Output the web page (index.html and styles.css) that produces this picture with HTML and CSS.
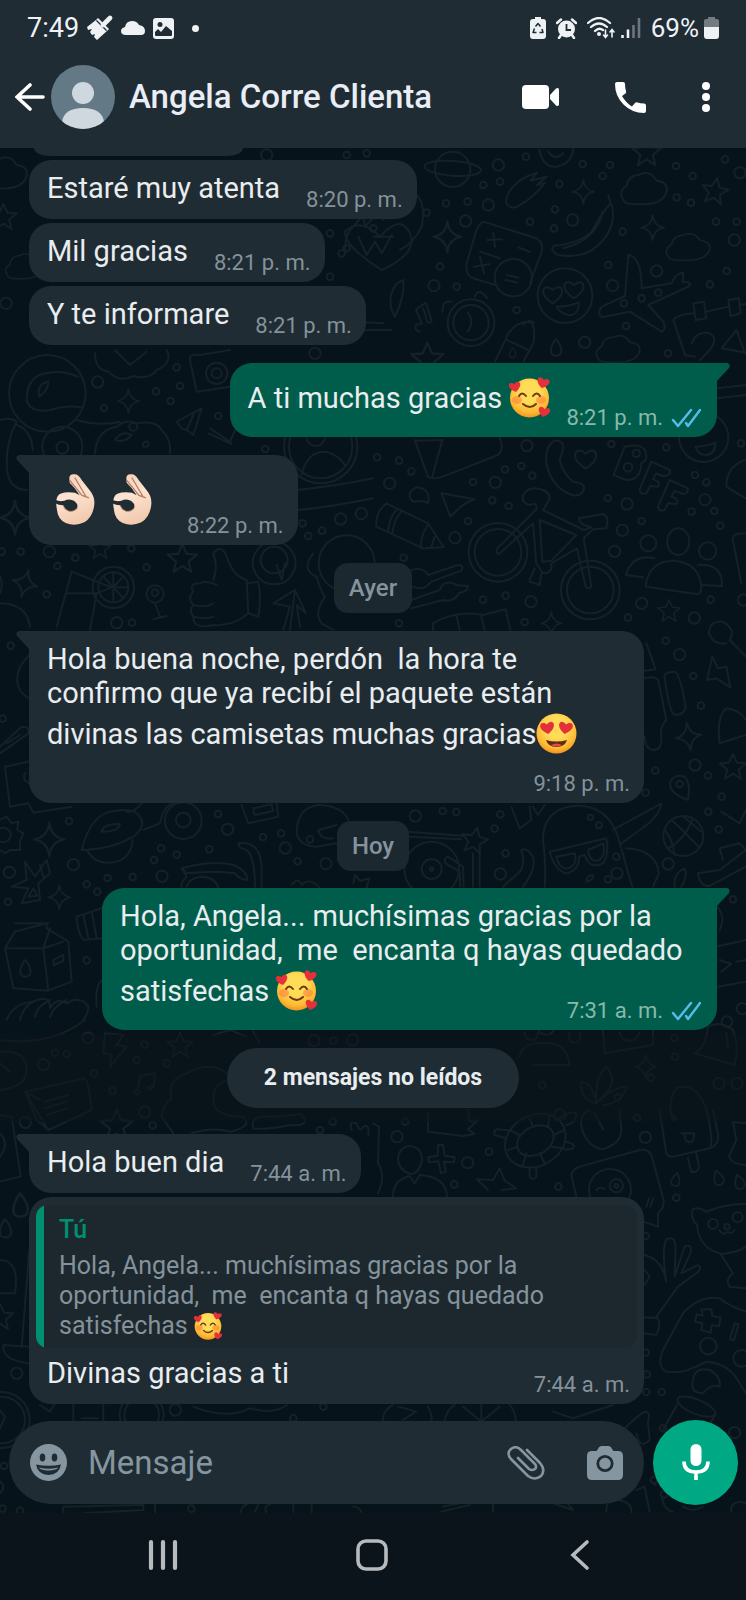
FILE: index.html
```html
<!DOCTYPE html>
<html lang="es">
<head>
<meta charset="utf-8">
<meta name="viewport" content="width=device-width, initial-scale=1">
<title>Angela Corre Clienta</title>
<link rel="stylesheet" href="styles.css">
</head>
<body>
<svg class="defs" aria-hidden="true">
  <defs>
    <radialGradient id="skin" cx=".5" cy=".35" r=".65"><stop offset=".4" stop-color="#ffdc58"/><stop offset=".8" stop-color="#fdb933"/><stop offset="1" stop-color="#f3941f"/></radialGradient>
    <linearGradient id="palm" x1="0" y1="0" x2=".3" y2="1"><stop offset="0" stop-color="#f3cdb5"/><stop offset=".5" stop-color="#fce3d1"/><stop offset="1" stop-color="#f3cbb0"/></linearGradient>
    <path id="heart" d="M0 25C-50-5-25-40 0-15C25-40 50-5 0 25Z"/>
    <symbol id="e-hearts" viewBox="0 0 41 41">
      <circle cx="20.500" cy="21" r="19.500" fill="url(#skin)"/>
      <ellipse cx="8" cy="23" rx="5" ry="4" fill="#ff7a3c" opacity=".55"/><ellipse cx="32" cy="23" rx="5" ry="4" fill="#ff7a3c" opacity=".55"/>
      <path d="M10 19q3-5 7 0M24 19q4-5 7 0M14 27q7 6 13 0" fill="none" stroke="#6b3a14" stroke-width="2" stroke-linecap="round"/>
      <g fill="#e5303b"><use href="#heart" transform="translate(6 10) rotate(-12) scale(.2)"/><use href="#heart" transform="translate(34 6) rotate(14) scale(.21)"/><use href="#heart" transform="translate(35 35) rotate(12) scale(.2)"/></g>
    </symbol>
    <symbol id="e-love" viewBox="0 0 41 41">
      <circle cx="20.500" cy="20.500" r="20" fill="url(#skin)"/>
      <g fill="#e5303b"><use href="#heart" transform="translate(11.500 15) rotate(-10) scale(.24)"/><use href="#heart" transform="translate(29.500 15) rotate(10) scale(.24)"/></g>
      <path d="M10 27q10.500 3 21 0q-2 7-10.500 7q-8.500 0-10.500-7Z" fill="#5c2c12"/><path d="M15 32q5.500-3 11 0q-5 3-11 0Z" fill="#e5484f"/>
    </symbol>
    <symbol id="e-ok" viewBox="138 363 171 171">
      <path d="M205 384Q206 371 220 373Q232 372 242 390L266 421Q282 440 280 462Q277 500 250 517Q222 530 194 519Q170 507 168 480Q160 440 178 431Q196 424 222 428L236 436Q222 412 206 398Z" fill="url(#palm)"/>
      <path d="M222 384L254 438M207 392L243 436L262 443" fill="none" stroke="#b77d62" stroke-width="4" stroke-linecap="round"/>
      <path d="M162 449Q176 456 190 452Q206 444 220 453Q234 464 227 477Q216 488 200 482Q190 476 186 466Q174 466 162 460Z" fill="#1f2c34"/>
      <path d="M186 466Q190 480 204 484Q220 486 229 474" fill="none" stroke="#c68c70" stroke-width="3"/>
    </symbol>
    <symbol id="ticks" viewBox="0 0 30 20"><path d="M2 12L7 18L20 2M15 15L17 18L29 2" fill="none" stroke="#53bdeb" stroke-width="2.400" stroke-linecap="round" stroke-linejoin="round"/></symbol>
    <path id="star" d="M0-38L12-12 40-10 17 9 24 37 0 21-24 37-17 9-40-10-12-12Z"/>
    <path id="spark" d="M0-42Q4-6 38 0Q4 6 0 42Q-4 6-38 0Q-4-6 0-42Z"/>
    <path id="cloud" d="M-55 40Q-80 10-50-10Q-45-40-15-42Q20-60 40-25Q80-20 68 15Q50 50-10 45Q-40 48-55 40Z"/>
    <path id="drop" d="M0-25C25 5 20 25 0 25C-20 25-18 0 0-25Z"/>
    <path id="dots-a" d="M250 135h0M300 125h0M378 50h0M548 72h0M630 75h0M608 108h0M478 132h0M138 190h0M203 185h0M80 218h0M465 208h0M462 265h0M390 245h0M668 275h0M828 78h0M878 108h0M830 172h0M873 188h0M975 58h0M948 245h0M1010 245h0M120 380h0M170 440h0M350 510h0M625 375h0M725 475h0M775 458h0M672 490h0M980 393h0M930 433h0M678 558h0M804 640h0M-160 45h0M-100 40h0M-160 325h0M-210 280h0M-80 265h0M-175 340h0M-210 410h0"/>
    <path id="rings-a" d="M295 75h0M265 195h0M518 240h0M197 243h0M1020 98h0M1003 300h0M102 437h0M638 437h0M770 393h0M554 607h0M-400 45h0"/>
    <path id="dots-b" d="M12 82h0M78 92h0M115 124h0M300 156h0M396 118h0M445 108h0M478 137h0M358 211h0M407 228h0M285 273h0M715 42h0M880 52h0M704 204h0M966 135h0M1000 157h0M806 273h0M956 245h0M1024 243h0M1042 287h0M92 383h0M330 509h0M398 497h0M455 576h0M1013 509h0M765 563h0M878 632h0M961 738h0M984 827h0M78 580h0M1104 40h0"/>
    <path id="rings-b" d="M462 47h0M50 160h0M367 157h0M762 222h0M996 209h0M246 323h0M748 301h0M725 364h0M474 515h0M806 520h0M964 564h0M920 674h0M1112 510h0"/>
    <path id="dots-c" d="M530 52h0M468 124h0M540 108h0M512 153h0M312 174h0M655 198h0M796 297h0M62 605h0M226 623h0M172 648h0M440 652h0M140 733h0M350 816h0M396 818h0M966 542h0M925 558h0M908 520h0M394 595h0M5 605h0"/>
    <path id="rings-c" d="M293 96h0M148 605h0M1022 507h0M1084 491h0M945 10h0M18 -140h0"/>
    <path id="dots-d" d="M32 77h0M8 296h0M207 603h0M483 685h0M530 704h0M462 720h0M628 688h0M398 771h0M323 774h0M260 793h0M292 815h0M654 582h0M789 651h0M843 640h0M893 724h0M24 846h0M260 1021h0M930 658h0"/>
    <path id="rings-d" d="M683 628h0M220 734h0M28 757h0M486 769h0M856 684h0M978 731h0M350 8h0"/>
    <path id="dots-e" d="M847 32h0M1005 47h0M1046 110h0M1006 155h0M1037 208h0M209 153h0M250 156h0M382 163h0M365 206h0M398 280h0M730 290h0M705 358h0M1080 418h0M904 834h0M818 98h0M508 975h0M834 953h0M906 890h0M735 1012h0"/>
    <path id="rings-e" d="M966 15h0M127 168h0M382 342h0M886 312h0M732 340h0M1108 746h0M1038 970h0M1092 970h0"/>
    <path id="dots-f" d="M434 74h0M500 130h0M410 120h0M200 102h0M165 98h0M282 160h0M338 212h0M458 316h0M998 305h0M960 330h0M375 15h0M1000 62h0"/>
    <path id="rings-f" d="M264 54h0M130 134h0M434 276h0M76 307h0M942 62h0M50 1060h0M1058 60h0M526 1170h0"/>
    <path id="dots-g" d="M97 35h0M348 125h0M244 223h0M556 230h0M792 24h0M910 263h0M818 378h0M822 793h0M820 846h0M866 846h0M870 955h0M818 728h0"/>
    <path id="rings-g" d="M72 80h0M284 158h0M817 82h0M1085 968h0M493 973h0M560 15h0"/>
    <path id="dots-h" d="M970 50h0M880 85h0M12 228h0M8 356h0M60 362h0M574 356h0M1992 313h0M1962 270h0"/>
  </defs>
</svg>

<div class="phone">
  <div class="status">
    <div class="status__side">
      <span class="clock">7:49</span>
      <svg class="brush" viewBox="0 0 26 26" aria-hidden="true"><path d="M0 12L9 5L20 16L10 25L7 22L8 19L5 20L3 17L5 14L1 15Z" fill="#eef2f5"/><path d="M11 3L22 14L20 16L9 5Z" fill="#eef2f5"/><path d="M9.500 5.500L19.500 15.500" stroke="#1f2c34" stroke-width="1.200"/><path d="M16 10L23 3" stroke="#eef2f5" stroke-width="4.600" stroke-linecap="round"/></svg>
      <svg class="cloud" viewBox="0 0 24 14" aria-hidden="true"><path d="M5 14Q0 14 0 10Q0 7 4 6Q5 0 11 0Q16 0 18 4Q24 5 24 10Q24 14 20 14Z" fill="#eef2f5"/></svg>
      <svg class="photo" viewBox="0 0 21 21" aria-hidden="true"><rect width="21" height="21" rx="3" fill="#eef2f5"/><circle cx="7" cy="6.500" r="2.500" fill="#1f2c34"/><path d="M2 14L5 11L8 14L13 8L19 13V17Q19 18 18 18H3Q2 18 2 17Z" fill="#1f2c34"/></svg>
      <span class="more-dot"></span>
    </div>
    <div class="status__side status__side--end">
      <svg class="eco" viewBox="0 0 16 22" aria-hidden="true"><path d="M5 0h6v2h2q3 0 3 3v14q0 3-3 3H3q-3 0-3-3V5q0-3 3-3h2Z" fill="#eef2f5"/><path d="M5.500 9.500L8 6.500L10.500 9.500M12 12L13 15.500H9.500M6.500 15.500H3L4.500 11.500" fill="none" stroke="#1f2c34" stroke-width="1.500" stroke-linejoin="round"/></svg>
      <svg class="alarm" viewBox="0 0 21 21" aria-hidden="true"><circle cx="10.500" cy="11" r="8.500" fill="#eef2f5"/><path d="M1 5L5 1.500M20 5L16 1.500M5 17L3 20M16 17L18 20" stroke="#eef2f5" stroke-width="2.500" stroke-linecap="round"/><path d="M10.500 6V12H15" fill="none" stroke="#1f2c34" stroke-width="1.800"/></svg>
      <svg class="wifi" viewBox="0 0 28 22" aria-hidden="true"><g fill="none" stroke="#eef2f5" stroke-width="2.300" stroke-linecap="round"><path d="M1 6Q12-4 23 6M4 10Q12 3 20 10M8 14Q12 10 16 13"/><path d="M18.500 13V20M16.500 18L18.500 20.500L20.500 18M25 20V13M23 15L25 12.500L27 15" stroke-width="1.600"/></g><circle cx="12" cy="17" r="2" fill="#eef2f5"/></svg>
      <svg class="signal" viewBox="0 0 20 21" aria-hidden="true"><path d="M1.500 17V20M7 11.500V20" stroke="#eef2f5" stroke-width="2.600"/><path d="M12.500 7V20M18 0V20" stroke="#6d767c" stroke-width="2.600"/></svg>
      <span class="percent">69%</span>
      <svg class="battery" viewBox="0 0 15 22" aria-hidden="true"><path d="M4 0h7v2h2q2 0 2 2v6H0V4q0-2 2-2h2Z" fill="#747c81"/><path d="M0 10h15v9q0 3-3 3H3q-3 0-3-3Z" fill="#eef2f5"/></svg>
    </div>
  </div>

  <header class="appbar">
    <button class="icon-btn back" aria-label="Atrás"><svg viewBox="0 0 30 28"><path d="M28 14H2M15 2L2 14L15 26" fill="none" stroke="#fff" stroke-width="3.600" stroke-linecap="round"/></svg></button>
    <svg class="avatar" viewBox="0 0 64 64" aria-hidden="true"><defs><clipPath id="round"><circle cx="32" cy="32" r="32"/></clipPath></defs><g clip-path="url(#round)"><path d="M0 0h64v64H0Z" fill="#647986"/><circle cx="32" cy="28" r="11" fill="#cfd8df"/><path d="M11 64V57Q13 43 32 43Q51 43 53 57V64Z" fill="#cfd8df"/></g></svg>
    <h1 class="title">Angela Corre Clienta</h1>
    <div class="actions">
      <button class="icon-btn video" aria-label="Videollamada"><svg viewBox="0 0 37 24"><rect width="27" height="24" rx="4" fill="#fff"/><path d="M28 10L34 3.500Q37 2 37 5V19Q37 22 34 20.500L28 14Z" fill="#fff"/></svg></button>
      <button class="icon-btn call" aria-label="Llamar"><svg viewBox="0 0 31 31"><path d="M2 0H8Q10 0 10 2Q10 6 11 9Q11.500 10.500 10.500 11.500L7 14Q11 21 17 24.500L20 21Q21 20 22.500 20.500Q25 21.500 29 21.500Q31 21.500 31 23.500V29Q31 31 29 31Q17 31 8.500 22.500Q0 14 0 2Q0 0 2 0Z" fill="#fff"/></svg></button>
      <button class="icon-btn menu" aria-label="Más opciones"><svg viewBox="0 0 8 30"><g fill="#fff"><circle cx="4" cy="4" r="4"/><circle cx="4" cy="15" r="4"/><circle cx="4" cy="26" r="4"/></g></svg></button>
    </div>
  </header>

  <main class="chat">
    <svg class="wallpaper" viewBox="0 148 746 1365" preserveAspectRatio="xMidYMin slice" aria-hidden="true">
      <g transform="translate(400 140) scale(.3333)">
        <use class="dot" href="#dots-a"/><use class="dot-in" href="#dots-a"/><use class="ring" href="#rings-a"/><use class="ring-in" href="#rings-a"/>
        <circle cx="158" cy="88" r="53"/><ellipse cx="158" cy="85" rx="85" ry="22" transform="rotate(4 158 85)"/><path d="M418 30Q430 85 470 80Q520 70 520 20M445 35q20 30 45 5"/>
        <path d="M325 160Q350 115 412 98L392 122L440 110L410 135L435 128Q395 180 345 203Q305 200 325 160Z"/>
        <use href="#spark" transform="translate(550 155) scale(.85)"/><use href="#spark" transform="translate(142 290) scale(1.1)"/><use href="#spark" transform="translate(758 263) scale(.9)"/>
        <use href="#cloud" transform="translate(730 147)"/><use href="#cloud" transform="translate(862 322) scale(.95 .85)"/><use href="#cloud" transform="translate(652 628) scale(.95 .85)"/><use href="#cloud" transform="translate(-1190 100)"/><use href="#cloud" transform="translate(-1130 380) scale(.8)"/>
        <use href="#star" transform="translate(945 152) rotate(10)"/><use href="#star" transform="translate(740 35) scale(1.1)"/><use href="#star" transform="translate(82 655) scale(1.2)"/><use href="#star" transform="translate(-1190 230)"/>
        <path d="M625 165L632 190Q600 225 575 275Q540 310 460 318Q450 335 475 345Q560 360 610 300Q650 250 635 195M608 215Q590 300 490 325"/>
        <path d="M250 245L410 295Q432 310 425 335L390 430M250 245Q232 255 225 285L200 370Q195 405 220 415L285 435M280 280l5 40M262 300l45-2M240 350l12 50M222 380l48-8M355 322l36 14M320 405l36 8M316 420l36 8M300 355L240 335"/><circle cx="340" cy="413" r="56"/>
        <circle cx="495" cy="467" r="82"/><use href="#heart" transform="translate(458 465)"/><use href="#heart" transform="translate(522 450)"/><path d="M470 500Q505 500 537 487Q535 530 505 525Q480 520 470 500Z"/>
        <path d="M685 345Q725 350 725 445L815 430Q825 400 850 398L848 425Q880 425 865 440L745 495L790 545Q800 570 785 575L690 515L605 532Q590 520 605 500L675 468Z"/>
        <circle cx="213" cy="548" r="70"/><circle cx="213" cy="548" r="53"/><path d="M203 518Q225 545 203 575M128 515Q125 480 155 485M225 470Q235 440 262 475M60 575Q40 570 48 555L65 550L48 508L78 488L95 545Q85 555 80 540L70 505"/>
        <path d="M285 665L325 580Q350 545 385 545Q410 550 400 610L370 665M320 600L390 632M370 555Q385 535 402 548"/><use href="#drop" transform="translate(467 622)"/><use href="#drop" transform="translate(337 638) scale(.6)"/>
        <path d="M820 540Q830 525 880 520M915 515L985 500M1018 495L1050 490M820 540L855 645L885 650M880 490l32-5 7 50-32 5ZM985 480l32-5 5 45-30 8ZM875 610Q890 570 930 580Q960 600 920 640L900 660M965 625L1010 570L1035 640M965 625L1050 640"/>
        <path d="M950 745L1038 735M950 775L1038 765M-165 330Q-165 280-140 260L-110 225L-105 260L-60 210L-50 240L5 140Q20 130 25 200L45 160Q80 190 65 260Q40 310 0 330M-165 275Q-165 320-55 390Q55 340 30 280Q0 220-60 290Q-120 230-165 275ZM-125 290L-100 345L-75 305L-55 340L-25 285M-80 290l60 0"/>
        <path d="M10 420Q15 470-15 530Q-45 480-10 430ZM-180 570h110l45 0M-180 570L-140 545L-50 550"/>
      </g>
      <g transform="translate(373 430) scale(.3333)">
        <use class="dot" href="#dots-b"/><use class="dot-in" href="#dots-b"/><use class="ring" href="#rings-b"/><use class="ring-in" href="#rings-b"/>
        <path d="M125 30L165 140Q180 150 210 140L375 75Q395 60 380 20M208 30L178 140M130 32L210 30"/>
        <path d="M545 32Q575 30 570 60L560 90Q570 130 600 155Q640 160 632 180Q620 205 590 192Q535 170 520 100Q515 50 545 32Z"/><use href="#heart" transform="translate(638 88) scale(1.1)"/>
        <path d="M755 50Q820 35 820 80Q820 95 805 98Q805 150 760 150L722 135ZM835 95L890 120Q895 140 870 138L850 130L840 148Q865 155 855 170L832 168L820 190Q800 195 800 178ZM890 150L945 175Q945 195 925 190L905 182L895 200Q920 205 910 222L885 220L875 240Q855 245 855 230Z"/><circle cx="790" cy="70" r="11"/><circle cx="765" cy="112" r="13"/>
        <circle cx="375" cy="367" r="88"/><circle cx="375" cy="367" r="70"/><circle cx="652" cy="480" r="88"/><circle cx="652" cy="480" r="70"/>
        <path d="M375 372Q365 360 378 350L490 238Q495 215 470 225Q445 220 450 195Q470 165 510 180Q540 195 525 215L510 240L632 300L655 292Q620 285 618 265L690 252Q710 260 700 295L660 298L632 325L655 470Q645 480 638 470L612 355L535 400Q540 430 510 430L490 400L480 280L378 372M500 270L610 315L535 392L508 395ZM485 415L470 450M505 430L500 465L470 455"/>
        <circle cx="826" cy="340" r="24"/><ellipse cx="916" cy="335" rx="33" ry="40"/><circle cx="1004" cy="363" r="26"/><path d="M818 465Q830 390 905 392Q980 400 985 470Q985 495 970 492L830 472Q815 470 818 465ZM845 385Q780 370 758 435L810 442M975 405Q1050 400 1047 468L990 465"/>
        <use href="#star" transform="translate(888 542) scale(.85)"/><use href="#spark" transform="translate(947 920) rotate(-8)"/><use href="#spark" transform="translate(535 580) scale(.8)"/>
        <path d="M40 220L165 280L212 352L150 355L10 290Q5 250 40 220ZM70 240Q50 260 45 305M85 245Q62 270 58 310M165 285Q140 320 145 355M185 320L175 350"/><path d="M205 190L305 208Q275 215 232 260ZM165 220Q175 175 130 172Q95 190 120 215Q150 210 165 220Z"/>
        <path d="M115 420Q150 410 165 435L255 405Q275 405 265 422L175 455Q150 485 120 470M115 510L200 480Q215 445 250 465L285 468Q285 485 260 488Q240 520 210 510L115 535"/><path d="M180 600V580Q250 540 330 555L398 538L412 600M250 555L260 600M325 560L335 600"/>
        <circle cx="992" cy="22" r="74"/><path d="M968 50Q1000 50 1028 38Q1025 75 1000 75Q975 75 968 50ZM1115 90Q1060 110 1060 170Q1090 190 1119 205M1115 310Q1075 310 1080 330L1105 460"/>
        <path d="M815 745Q855 735 858 760L880 870Q860 890 865 920Q868 960 840 960Q815 955 815 920M820 640L848 718L815 722M875 745Q870 725 905 725Q920 725 938 830Q935 855 905 855Q890 850 875 745Z"/>
        <path d="M1008 610Q1010 570 1050 575Q1090 600 1070 630L1119 680M1008 610Q1020 645 1060 640M1018 680L1002 750L1030 745L1072 772L1060 710L1035 715ZM1040 940Q1030 860 1060 835Q1100 840 1119 870M1040 940L1119 915"/>
      </g>
      <g transform="translate(0 350) scale(.3333)">
        <use class="dot" href="#dots-c"/><use class="dot-in" href="#dots-c"/><use class="ring" href="#rings-c"/><use class="ring-in" href="#rings-c"/>
        <circle cx="142" cy="130" r="115"/><path d="M80 150Q80 75 145 68Q190 60 235 80M80 150Q90 190 150 180Q200 165 245 172M118 140Q110 100 145 95Q145 120 118 140ZM230 210Q300 230 360 215M0 210Q30 200 50 215Q20 270 20 340Q20 420 80 420M50 225Q95 240 98 300M285 310Q290 240 350 230Q380 205 410 220Q470 210 485 240Q515 270 510 310"/>
        <circle cx="187" cy="290" r="60"/><circle cx="187" cy="293" r="18"/><circle cx="400" cy="230" r="12"/><path d="M345 270q20-30 50-15q-20 25-50 15M430 290q-5-18 15-15q5 18-15 15"/>
        <path d="M285 10Q285 60 325 65Q360 100 400 78Q450 90 470 60Q520 40 500 0M345 0L390 45L440 5M570 30Q565 10 600 15L690 0M570 30L590 125L690 110"/><circle cx="650" cy="70" r="32"/><circle cx="650" cy="70" r="15"/>
        <use href="#spark" transform="translate(385 153) scale(.85)"/><use href="#spark" transform="translate(45 503) scale(1.2)"/><use href="#spark" transform="translate(75 700) rotate(15)"/><use href="#star" transform="translate(547 625) scale(1.1)"/><use href="#star" transform="translate(300 595) scale(.8)"/>
        <path d="M605 175L530 215L545 235L560 240L580 255ZM580 195L560 240M630 235L690 275L712 225M625 250L695 282"/>
        <circle cx="962" cy="290" r="110"/><circle cx="962" cy="290" r="95"/><path d="M905 375Q920 305 975 305Q1010 310 1035 345M920 265a28 28 0 0 0 55 0M890 420Q1000 410 1119 385M895 480Q1000 470 1119 445"/>
        <circle cx="340" cy="712" r="62"/><circle cx="340" cy="712" r="45"/><path d="M340 712V670M340 712L370 680M340 712H383M340 712L370 745M340 712V755M340 712L310 680M215 665L335 712L290 730L270 840M215 665L170 830M200 730H290"/>
        <circle cx="465" cy="732" r="26"/><circle cx="465" cy="728" r="10"/><path d="M465 760L480 800M460 808L500 798M822 575a64 64 0 1 0 1 0M822 590a40 40 0 1 0 1 0M830 645L845 690L855 640"/>
        <path d="M640 690Q655 650 640 610Q665 580 680 620Q700 680 740 690L745 790Q700 830 640 825Q580 840 580 800Q565 780 580 765Q560 745 580 725Q565 700 600 700Q620 690 650 705M580 765Q620 775 640 760M580 800Q620 810 640 800M745 700L775 695Q785 740 775 800L745 790"/>
        <path d="M820 760L885 720L918 790L890 765L900 830M885 720L870 840M820 760L870 770L850 840M0 760Q80 760 90 830M0 680Q10 700 0 730"/><circle cx="1040" cy="640" r="84"/><path d="M940 610Q900 660 950 680Q960 720 975 740Q940 790 965 820L1000 840"/>
      </g>
      <g transform="translate(0 620) scale(.3333)">
        <use class="dot" href="#dots-d"/><use class="dot-in" href="#dots-d"/><use class="ring" href="#rings-d"/><use class="ring-in" href="#rings-d"/>
        <path d="M88 105Q40 150 55 200Q65 225 88 235M0 380L65 320Q90 320 85 340L0 400M20 370L60 345M15 440L85 425M15 440L30 560L85 550M88 490Q65 480 75 460M85 550L100 578L215 560M0 600L20 590L35 610L55 605L52 630L70 640L60 665L60 690L30 690L15 700L0 690"/><circle cx="10" cy="645" r="22"/>
        <use href="#spark" transform="translate(148 658) scale(1.2)"/><use href="#spark" transform="translate(178 832) scale(.85)"/>
        <path d="M245 690Q270 590 330 575Q400 560 420 590Q440 620 400 650Q330 690 245 690ZM305 635Q310 610 360 612Q355 635 305 635ZM430 630L480 610Q490 560 520 550M425 550Q400 580 380 575M260 690Q290 740 350 725Q395 710 398 660"/><circle cx="550" cy="602" r="55"/><circle cx="550" cy="600" r="22"/>
        <path d="M725 555L745 610L835 590L830 550M760 565l55-12 4 20-55 12ZM75 725L105 770L140 720L150 760L115 790L120 840L65 850L85 805L35 800L80 780ZM120 735l10 35M85 830l15-25 12 22Z"/>
        <path d="M890 640Q890 560 960 555Q1030 560 1045 600M890 640Q900 680 950 680L1010 670M1010 615L955 630Q960 660 1000 655"/>
        <path d="M545 745Q640 720 700 735Q740 750 742 780Q720 780 705 760Q650 750 560 760ZM545 745L560 770Q540 790 545 805M560 800Q570 770 610 770Q650 775 655 805M715 670Q780 660 785 740V800M715 670Q715 685 740 690Q765 710 765 800M1060 790l5-25 15 18 28-8-8 28M875 795Q895 770 905 795Q930 770 960 805"/>
        <path d="M45 935L140 910L140 925L205 965L215 1085L145 1112L40 1105L15 985L45 935ZM45 910L145 910M15 985L130 985L150 925M130 985L145 1112M130 985L190 965M160 1020l30-15v18l-28 12Z"/><use href="#drop" transform="translate(75 1045)"/>
        <path d="M230 890L305 865M230 890Q230 930 250 960L305 955M250 885L265 955M275 875L290 955M20 1200Q40 1150 100 1145Q150 1120 150 1165Q170 1130 200 1150Q240 1125 265 1160Q265 1180 250 1200M60 1200Q70 1160 100 1145M105 1190Q110 1160 150 1140M150 1190Q160 1160 200 1140M305 1080Q285 1100 290 1160"/>
      </g>
      <g transform="translate(373 760) scale(.3333)">
        <use class="dot" href="#dots-e"/><use class="dot-in" href="#dots-e"/><use class="ring" href="#rings-e"/><use class="ring-in" href="#rings-e"/>
        <use href="#star" transform="translate(305 240) rotate(12)"/><use href="#star" transform="translate(1080 20)"/><path d="M105 215L275 228M300 280V380M320 280V380M110 230L265 238"/><circle cx="176" cy="327" r="82"/><circle cx="176" cy="327" r="30"/><circle cx="176" cy="327" r="5"/><path d="M225 290Q205 300 225 315L260 335L262 380M225 290L270 320L272 380"/>
        <path d="M515 380Q520 320 510 240Q510 150 600 138Q700 130 735 230Q760 320 778 380M530 275L700 235Q710 280 690 310Q650 330 635 285L618 290Q620 330 580 340Q545 330 530 275ZM550 290Q560 330 585 325Q615 315 605 280ZM645 270Q650 310 680 300Q700 280 690 250ZM720 210L865 130Q860 170 800 210L745 250M760 265Q850 270 858 340L840 380M415 140L440 205L475 180L470 140M480 140l15 25 20-30M640 365q0-20 20-20q0 18-20 20M450 380Q490 330 480 290Q460 260 445 270Q460 320 435 340L390 380"/><circle cx="652" cy="172" r="8"/><circle cx="678" cy="196" r="9"/>
        <circle cx="931" cy="228" r="60"/><path d="M895 180Q930 210 978 262M885 265Q935 240 960 175M875 210Q900 240 905 285M930 168L985 215"/>
        <path d="M945 120Q885 100 892 65Q905 40 935 50Q955 70 945 120Z"/><circle cx="920" cy="72" r="10"/>
        <path d="M1045 155L1100 190L1119 150M975 340L1040 330L1119 270M975 340Q980 380 1010 378L1119 320M1040 265L1100 250L1119 270M1040 265L1050 300M905 380Q900 340 935 325Q945 350 925 380M1032 440Q1060 470 1040 510M1030 560L1119 540M1040 600L1075 612L1045 635M1090 605L1119 600M1035 680L1119 665"/>
        <path d="M440 890Q450 840 530 850Q580 850 590 915L480 915M455 820a20 20 0 1 0 40 0M495 800a25 25 0 1 0 50 0M590 820a18 18 0 1 0 30 0M690 810L695 880L840 855V810M740 820a30 30 0 0 0 58 0M965 880Q1000 860 1005 800Q1040 780 1080 810Q1100 860 1085 915ZM1060 820l5 45"/><circle cx="1062" cy="785" r="16"/>
        <use href="#spark" transform="translate(818 920) scale(.85)"/><path d="M670 1030Q665 950 700 920Q735 960 700 1000L670 1030Q720 980 760 980Q750 1030 690 1035M670 1030Q620 1020 625 965Q660 970 670 1030M900 1080Q880 1030 910 985Q980 960 1010 1080"/>
      </g>
      <g transform="translate(0 1020) scale(.3333)">
        <use class="dot" href="#dots-f"/><use class="dot-in" href="#dots-f"/><use class="ring" href="#rings-f"/><use class="ring-in" href="#rings-f"/>
        <path d="M0 60Q150 80 255 0M315 40L370 45L350 75L380 80L330 140L335 105L310 100ZM0 95Q80 90 80 150Q80 200 0 210M0 130L30 155M75 215L255 175Q265 180 275 270L145 330ZM75 215L110 300L145 330M75 215L120 240M135 245l70-20M135 265l65-20M140 285l60-20M420 215q-8 15-20 3l14-10 6-40 45-8-4 40q-10 15-18 3l14-8"/>
        <use href="#star" transform="translate(540 75) scale(.95)"/><use href="#star" transform="translate(350 315) scale(1.2)"/><use href="#star" transform="translate(0 890)"/>
        <path d="M520 340L485 290Q490 250 515 235Q500 180 560 160Q630 120 680 160M575 340Q640 320 690 335Q760 320 730 290Q640 290 640 240Q640 180 700 180M760 325Q750 290 790 290Q870 290 900 280Q940 320 870 315Q800 330 760 325M1055 330Q1045 300 1070 310Q1080 340 1090 320Q1110 310 1105 345M640 45L690 30L740 50M760 35L780 70"/>
        <path d="M0 285L35 290L62 470L0 485M0 340Q30 370 0 410"/><use href="#drop" transform="translate(60 555) scale(1.400)"/><use href="#drop" transform="translate(15 625) scale(1.100)"/><path d="M0 720Q60 720 45 820L0 820M88 690L65 980M85 980L10 975Q5 1020 85 1030"/>
        <circle cx="5" cy="1200" r="84"/><circle cx="5" cy="1200" r="70"/><path d="M-5 1165L15 1190L0 1225M120 1155L150 1175L165 1150M220 1155V1205M310 1155V1205M245 1195h48"/><circle cx="425" cy="1185" r="66"/><circle cx="425" cy="1185" r="52"/><path d="M580 1160Q680 1200 750 1165Q820 1185 860 1155"/>
      </g>
      <g transform="translate(373 1110) scale(.3333)">
        <use class="dot" href="#dots-g"/><use class="dot-in" href="#dots-g"/><use class="ring" href="#rings-g"/><use class="ring-in" href="#rings-g"/>
        <path d="M165 10L165 65L270 78L305 72L285 58L315 30L290 35L285 0M0 40L18 50L15 160Q40 200 15 250M110 108Q145 110 147 150Q140 190 112 192Q75 180 75 145Q80 110 110 108ZM60 260Q60 210 110 198L125 220L140 195Q220 200 222 260"/>
        <path d="M195 105l15 0 5 32 30 5-2 15-30-2 6 30-15 4-8-35-28 3-2-15 28-5ZM380 175L395 212L430 235L385 240M380 175L360 210L312 208L345 240"/>
        <ellipse cx="487" cy="92" rx="95" ry="76" transform="rotate(-28 487 92)"/><ellipse cx="487" cy="92" rx="58" ry="42" transform="rotate(-28 487 92)"/><path d="M470 25L480 50M530 15L525 50M575 60L542 75M570 115L535 110M515 160L500 130M450 165L460 130M405 120L435 110M410 60L440 75M400 85L365 75Q360 55 380 58L415 62M470 170V200Q480 215 490 200V172M575 95Q610 100 600 115Q580 122 570 115M560 25Q590 0 610 10Q610 40 580 45"/>
        <path d="M625 50Q640 110 690 118Q745 100 745 60L740 0M625 50Q620 10 650 0M665 10L690 58M860 0L880 130Q890 145 910 138L1010 115Q1040 105 1035 70L1020 0M1010 115Q1025 100 1000 0M945 145L955 185Q975 190 978 170L970 130M925 70h38Q965 100 945 95Q935 95 935 72M900 30l12-6-14-8M1119 40L1080 35L1090 90L1068 140Q1080 165 1119 165"/>
        <use href="#drop" transform="translate(908 208) rotate(15) scale(.8)"/><use href="#drop" transform="translate(1035 203) rotate(-15) scale(.9)"/><use href="#drop" transform="translate(1098 215) rotate(-15) scale(.9)"/>
        <path d="M610 260L595 195Q600 175 620 170L800 120Q825 115 835 135L872 270Q875 295 855 310L855 350L812 335M820 290l8-25M832 290l8-25"/><circle cx="711" cy="240" r="63"/><circle cx="730" cy="227" r="20"/><circle cx="730" cy="227" r="6"/><path d="M670 240q10-12 25-3"/>
        <path d="M972 345Q950 320 960 297Q980 290 1000 305Q1060 280 1119 282M972 345Q980 420 1050 432Q1100 425 1119 410M1045 435L1080 490Q1055 510 1070 530L1119 535M1040 360q10 20 25 5q10 10 20-5"/><circle cx="1020" cy="342" r="15"/><circle cx="1094" cy="322" r="15"/><circle cx="1062" cy="350" r="8"/>
        <path d="M880 515Q865 420 880 388Q905 375 908 410L905 500L935 410Q960 400 952 430L925 490L975 465Q990 475 970 490L915 530L850 620M815 435Q870 450 880 515M815 622L855 625Q865 650 850 675L815 670M815 480l15 20-15 25"/>
        <path d="M870 720L930 610Q980 555 1040 565Q1070 590 1119 605M870 720Q850 770 880 785Q930 795 1000 755Q1070 760 1100 820L1119 850M985 598l30 0 3 20 25 5-5 25-22-2-3 22-28-8 3-20-22-5 5-22 18 4ZM1085 640l12 3-14 48-12-4Z"/><circle cx="1006" cy="708" r="25"/><circle cx="1106" cy="745" r="25"/>
        <path d="M960 810Q965 770 1010 780Q1045 800 1040 830Q1015 820 990 850Q950 850 960 810Z"/><ellipse cx="970" cy="890" rx="60" ry="22" transform="rotate(22 970 890)"/><path d="M912 885L870 960M1028 912L1000 960"/>
        <path d="M30 930Q30 900 60 885M165 890Q180 920 175 935M75 890L130 905L90 930M215 935Q220 900 245 885M325 885V935M325 935L270 890M325 935L380 890M430 935Q425 900 410 885M540 905L600 925L720 885"/>
        <path d="M750 960Q790 920 815 905Q835 905 825 935L830 990Q800 1020 790 970M840 1100q-10 20 8 25M700 1205Q700 1160 740 1170Q780 1180 775 1210M790 1140L815 1130L830 1205M865 1150Q870 1200 900 1205M930 1190q30 20 60 0M1075 1205Q1070 1180 1100 1175L1119 1180M205 1205L290 1185L285 1175L210 1190M340 1180h20v25M540 1180l60 20-20-25"/>
      </g>
      <g transform="translate(0 1390) scale(.3333)">
        <use class="dot" href="#dots-h"/><use class="dot-in" href="#dots-h"/><path d="M190 370V350L430 345V360L250 370M465 340V370M720 370Q730 340 740 345M765 365L775 345M800 370Q790 345 810 345M880 345v25M935 345v25M1060 350q20 0 25 20M0 275Q20 290 0 310"/>
      </g>
    </svg>

    <section class="messages" aria-label="Mensajes">
      <div class="stub"></div>
      <article class="bubble in"><p class="text">Estaré muy atenta</p><time class="time">8:20 p. m.</time></article>
      <article class="bubble in"><p class="text">Mil gracias</p><time class="time">8:21 p. m.</time></article>
      <article class="bubble in"><p class="text">Y te informare</p><time class="time">8:21 p. m.</time></article>
      <article class="bubble out tail first"><p class="text">A ti muchas gracias <svg class="emoji" role="img" aria-label="cara con corazones"><use href="#e-hearts"/></svg></p><time class="time">8:21 p. m.<svg class="ticks" role="img" aria-label="Leído"><use href="#ticks"/></svg></time></article>
      <article class="bubble in tail first"><p class="text hands"><svg class="emoji-big" role="img" aria-label="mano OK"><use href="#e-ok"/></svg><svg class="emoji-big" role="img" aria-label="mano OK"><use href="#e-ok"/></svg></p><time class="time">8:22 p. m.</time></article>
      <div class="day first">Ayer</div>
      <article class="bubble in tail first stacked"><p class="text">Hola buena noche, perdón  la hora te confirmo que ya recibí el paquete están divinas las camisetas muchas gracias<svg class="emoji" role="img" aria-label="cara enamorada"><use href="#e-love"/></svg></p><time class="time">9:18 p. m.</time></article>
      <div class="day first">Hoy</div>
      <article class="bubble out tail first wrapped"><p class="text">Hola, Angela... muchísimas gracias por la oportunidad,  me  encanta q hayas quedado satisfechas <svg class="emoji" role="img" aria-label="cara con corazones"><use href="#e-hearts"/></svg><time class="time">7:31 a. m.<svg class="ticks" role="img" aria-label="Leído"><use href="#ticks"/></svg></time></p></article>
      <div class="unread"><span class="unread__pill">2 mensajes no leídos</span></div>
      <article class="bubble in tail"><p class="text">Hola buen dia</p><time class="time">7:44 a. m.</time></article>
      <article class="bubble in reply">
        <blockquote class="quote">
          <p class="quote__name">Tú</p>
          <p class="quote__text">Hola, Angela... muchísimas gracias por la oportunidad,  me  encanta q hayas quedado satisfechas <svg class="emoji-small" role="img" aria-label="cara con corazones"><use href="#e-hearts"/></svg></p>
        </blockquote>
        <div class="reply__row"><p class="text">Divinas gracias a ti</p><time class="time">7:44 a. m.</time></div>
      </article>
    </section>

    <form class="composer">
      <div class="field">
        <button type="button" class="icon-btn smile" aria-label="Emojis"><svg viewBox="0 0 37 37"><circle cx="18.500" cy="18.500" r="18.500" fill="#8696a0"/><ellipse cx="12.500" cy="13.500" rx="2.800" ry="4" fill="#1f2c34"/><ellipse cx="24.500" cy="13.500" rx="2.800" ry="4" fill="#1f2c34"/><path d="M6 20.500Q18.500 23 31 20.500Q29 31 18.500 31Q8 31 6 20.500Z" fill="#1f2c34"/><path d="M9 23.500Q18.500 26 28 23.500Q27 26 18.500 26.500Q10 26 9 23.500Z" fill="#8696a0"/></svg></button>
        <input class="input" type="text" placeholder="Mensaje" aria-label="Mensaje">
        <button type="button" class="icon-btn clip" aria-label="Adjuntar"><svg viewBox="0 0 38 34"><path d="M20 4L33 17Q39 24 34 30Q28 35 21 30L4 13Q-1 7 4 3Q9-1 14 4L28 18Q30 21 28 23Q25 25 22 23L11 12" fill="none" stroke="#8696a0" stroke-width="2.600" stroke-linecap="round"/></svg></button>
        <button type="button" class="icon-btn camera" aria-label="Cámara"><svg viewBox="0 0 36 34"><path d="M5 5H9Q10 5 11 3Q12 0 15 0H21Q24 0 25 3Q26 5 27 5H31Q36 5 36 10V29Q36 34 31 34H5Q0 34 0 29V10Q0 5 5 5Z" fill="#8696a0"/><circle cx="18" cy="17.500" r="7.200" fill="none" stroke="#1f2c34" stroke-width="2.800"/></svg></button>
      </div>
      <button type="button" class="mic" aria-label="Grabar audio"><svg viewBox="0 0 28 37"><rect x="8.500" width="11" height="22" rx="5.500" fill="#fff"/><path d="M2 17.500Q2 28 14 28Q26 28 26 17.500M14 28V36" fill="none" stroke="#fff" stroke-width="3.600"/></svg></button>
    </form>
  </main>

  <nav class="navbar" aria-label="Sistema">
    <button class="icon-btn" aria-label="Recientes"><svg class="nav-icon" viewBox="0 0 32 32"><path d="M4 3V29M16 3V29M28 3V29" stroke="#b7bbbe" stroke-width="4.200" stroke-linecap="round"/></svg></button>
    <button class="icon-btn" aria-label="Inicio"><svg class="nav-icon" viewBox="0 0 32 32"><rect x="2" y="2" width="28" height="28" rx="8" fill="none" stroke="#b7bbbe" stroke-width="3.600"/></svg></button>
    <button class="icon-btn" aria-label="Volver"><svg class="nav-icon" viewBox="0 0 32 32"><path d="M23 3L9 16L23 29" fill="none" stroke="#b7bbbe" stroke-width="3.600" stroke-linecap="round"/></svg></button>
  </nav>
</div>
</body>
</html>
```
FILE: styles.css
```css
* { box-sizing: border-box; }

body {
  margin: 0;
  background: #0b141a;
  color: #e9edef;
  font-family: Roboto, "Liberation Sans", sans-serif;
}

p, h1, blockquote { margin: 0; }
.defs { position: absolute; width: 0; height: 0; }
.phone { display: flex; flex-direction: column; min-height: 100vh; }
svg { display: block; flex: none; }

.icon-btn {
  display: flex;
  align-items: center;
  justify-content: center;
  flex: none;
  padding: 0;
  border: 0;
  background: none;
}
.icon-btn svg { width: 100%; }

/* status bar */
.status {
  display: flex;
  justify-content: space-between;
  height: 56px;
  padding: 0 27px;
  background: #1f2c34;
  font-size: 27px;
  line-height: 32px;
  color: #eef2f5;
}
.status__side { display: flex; align-items: center; gap: 8px; }
.clock { width: 52px; }
.brush { width: 26px; height: 26px; }
.cloud { width: 24px; height: 14px; }
.photo { width: 21px; height: 21px; }
.more-dot { width: 7px; height: 7px; margin-left: 10px; border-radius: 50%; background: #eef2f5; }
.status__side--end { gap: 10px; }
.eco { width: 16px; height: 22px; }
.alarm { width: 21px; height: 21px; }
.wifi { width: 28px; height: 22px; }
.signal { width: 20px; height: 21px; margin-left: -4px; }
.percent { font-size: 26px; }
.battery { width: 15px; height: 22px; margin-left: -5px; }

/* contact bar */
.appbar {
  display: flex;
  align-items: center;
  height: 92px;
  padding: 0 36px 10px 15px;
  background: #1f2c34;
}
.back { width: 30px; }
.avatar { width: 64px; height: 64px; margin-left: 6px; }
.title { flex: 1; margin-left: 14px; font-size: 33px; font-weight: 500; line-height: 40px; color: #e9edf5; }
.actions { display: flex; align-items: center; gap: 56px; }
.video { width: 37px; }
.call { width: 31px; }
.menu { width: 8px; }

/* conversation */
.chat { position: relative; flex: 1; display: flex; flex-direction: column; overflow: hidden; background: #07131a; }
.wallpaper {
  position: absolute;
  inset: 0;
  width: 100%;
  height: 100%;
  fill: none;
  stroke: #152127;
  stroke-width: 6;
  stroke-linecap: round;
  stroke-linejoin: round;
}
.dot { stroke-width: 26; }
.dot-in { stroke: #07131a; stroke-width: 14; }
.ring { stroke-width: 40; }
.ring-in { stroke: #07131a; stroke-width: 28; }

.messages { position: relative; display: flex; flex-direction: column; gap: 4px; padding: 0 29px; }
.first { margin-top: 14px; }

.stub {
  width: 209px;
  height: 8px;
  margin-left: 5px;
  border-radius: 0 0 16px 16px / 0 0 8px 8px;
  background: #1f2c34;
}

.bubble {
  position: relative;
  display: flex;
  align-items: flex-end;
  gap: 26px;
  max-width: calc(100% - 73px);
  padding: 11px 14px 6px 18px;
  border-radius: 22px;
}
.in { align-self: flex-start; background: #1f2c34; }
.out { align-self: flex-end; padding-right: 16px; background: #005d4b; }
.out.bubble { gap: 16px; }
.in.tail { border-top-left-radius: 0; }
.out.tail { border-top-right-radius: 0; }
.tail::before { content: ""; position: absolute; top: 0; width: 14px; height: 19px; }
.in.tail::before { left: -13px; background: #1f2c34; clip-path: path("M3 0H14V19L1 5Q-1 1 3 0Z"); }
.out.tail::before { right: -13px; background: #005d4b; clip-path: path("M11 0H0V19L13 5Q15 1 11 0Z"); }

.text { padding-bottom: 8px; font-size: 29px; line-height: 34px; white-space: pre-wrap; }
.time { display: flex; align-items: center; flex: none; font-size: 22px; line-height: 26px; color: #84929b; }
.out .time { color: #87b9ad; }
.ticks { width: 30px; height: 20px; margin-left: 8px; }
.emoji { display: inline-block; width: 41px; height: 41px; margin: 3px 0 5px; vertical-align: -15px; }
.hands { display: flex; }
.emoji-big { width: 57px; height: 57px; margin: 5px 0 3px; }

.stacked { flex-direction: column; gap: 4px; }
.stacked .text { align-self: stretch; }

/* the time sits at the end of the last line */
.wrapped { margin-top: 13px; }
.wrapped .text { display: flow-root; padding-bottom: 0; }
.wrapped .time { float: right; margin-top: 31px; }

.day {
  align-self: center;
  padding: 10px 15px;
  border-radius: 14px;
  background: #1c282f;
  font-size: 24px;
  font-weight: 500;
  line-height: 30px;
  color: #84939d;
}

.unread { display: flex; justify-content: center; margin: 0 -29px 8px; padding: 14px; background: rgba(11, 20, 26, .5); }
.unread__pill {
  padding: 15px 37px;
  border-radius: 30px;
  background: #1f2c34;
  font-size: 23px;
  font-weight: 700;
  line-height: 30px;
}

.reply { flex-direction: column; align-items: stretch; gap: 8px; padding: 8px 7px 6px; }
.quote {
  padding: 10px 14px 7px 23px;
  border-radius: 12px;
  background: linear-gradient(to right, #009070 8px, #1d282e 8px);
  font-size: 25px;
  line-height: 30px;
}
.quote__name { margin-bottom: 6px; font-weight: 500; color: #009070; }
.quote__text { white-space: pre-wrap; color: #84929b; }
.emoji-small { display: inline-block; width: 28px; height: 28px; vertical-align: -6px; }
.reply__row { display: flex; align-items: flex-end; justify-content: space-between; padding: 0 7px 0 11px; }

/* message box */
.composer { position: relative; display: flex; align-items: center; gap: 9px; margin-top: auto; padding: 16px 8px 8px 9px; }
.field {
  display: flex;
  align-items: center;
  flex: 1;
  min-width: 0;
  height: 83px;
  padding: 0 21px;
  border-radius: 42px;
  background: #1f2c34;
}
.smile { width: 37px; }
.input {
  flex: 1;
  min-width: 0;
  margin-left: 21px;
  padding: 0;
  border: 0;
  outline: 0;
  background: none;
  color: #e9edef;
  font: 33px/40px Roboto, "Liberation Sans", sans-serif;
}
.input::placeholder { color: #8696a0; opacity: 1; }
.clip { width: 38px; }
.camera { width: 36px; margin-left: 42px; }
.mic {
  display: flex;
  align-items: center;
  justify-content: center;
  width: 85px;
  height: 85px;
  padding: 0;
  border: 0;
  border-radius: 50%;
  background: #00a884;
}
.mic svg { width: 28px; height: 37px; }

.navbar {
  display: grid;
  grid-template-columns: repeat(3, 28%);
  justify-content: center;
  height: 87px;
  padding: 0 3px 4px 0;
  background: #0b141a;
}
.navbar .nav-icon { width: 32px; height: 32px; }
```
